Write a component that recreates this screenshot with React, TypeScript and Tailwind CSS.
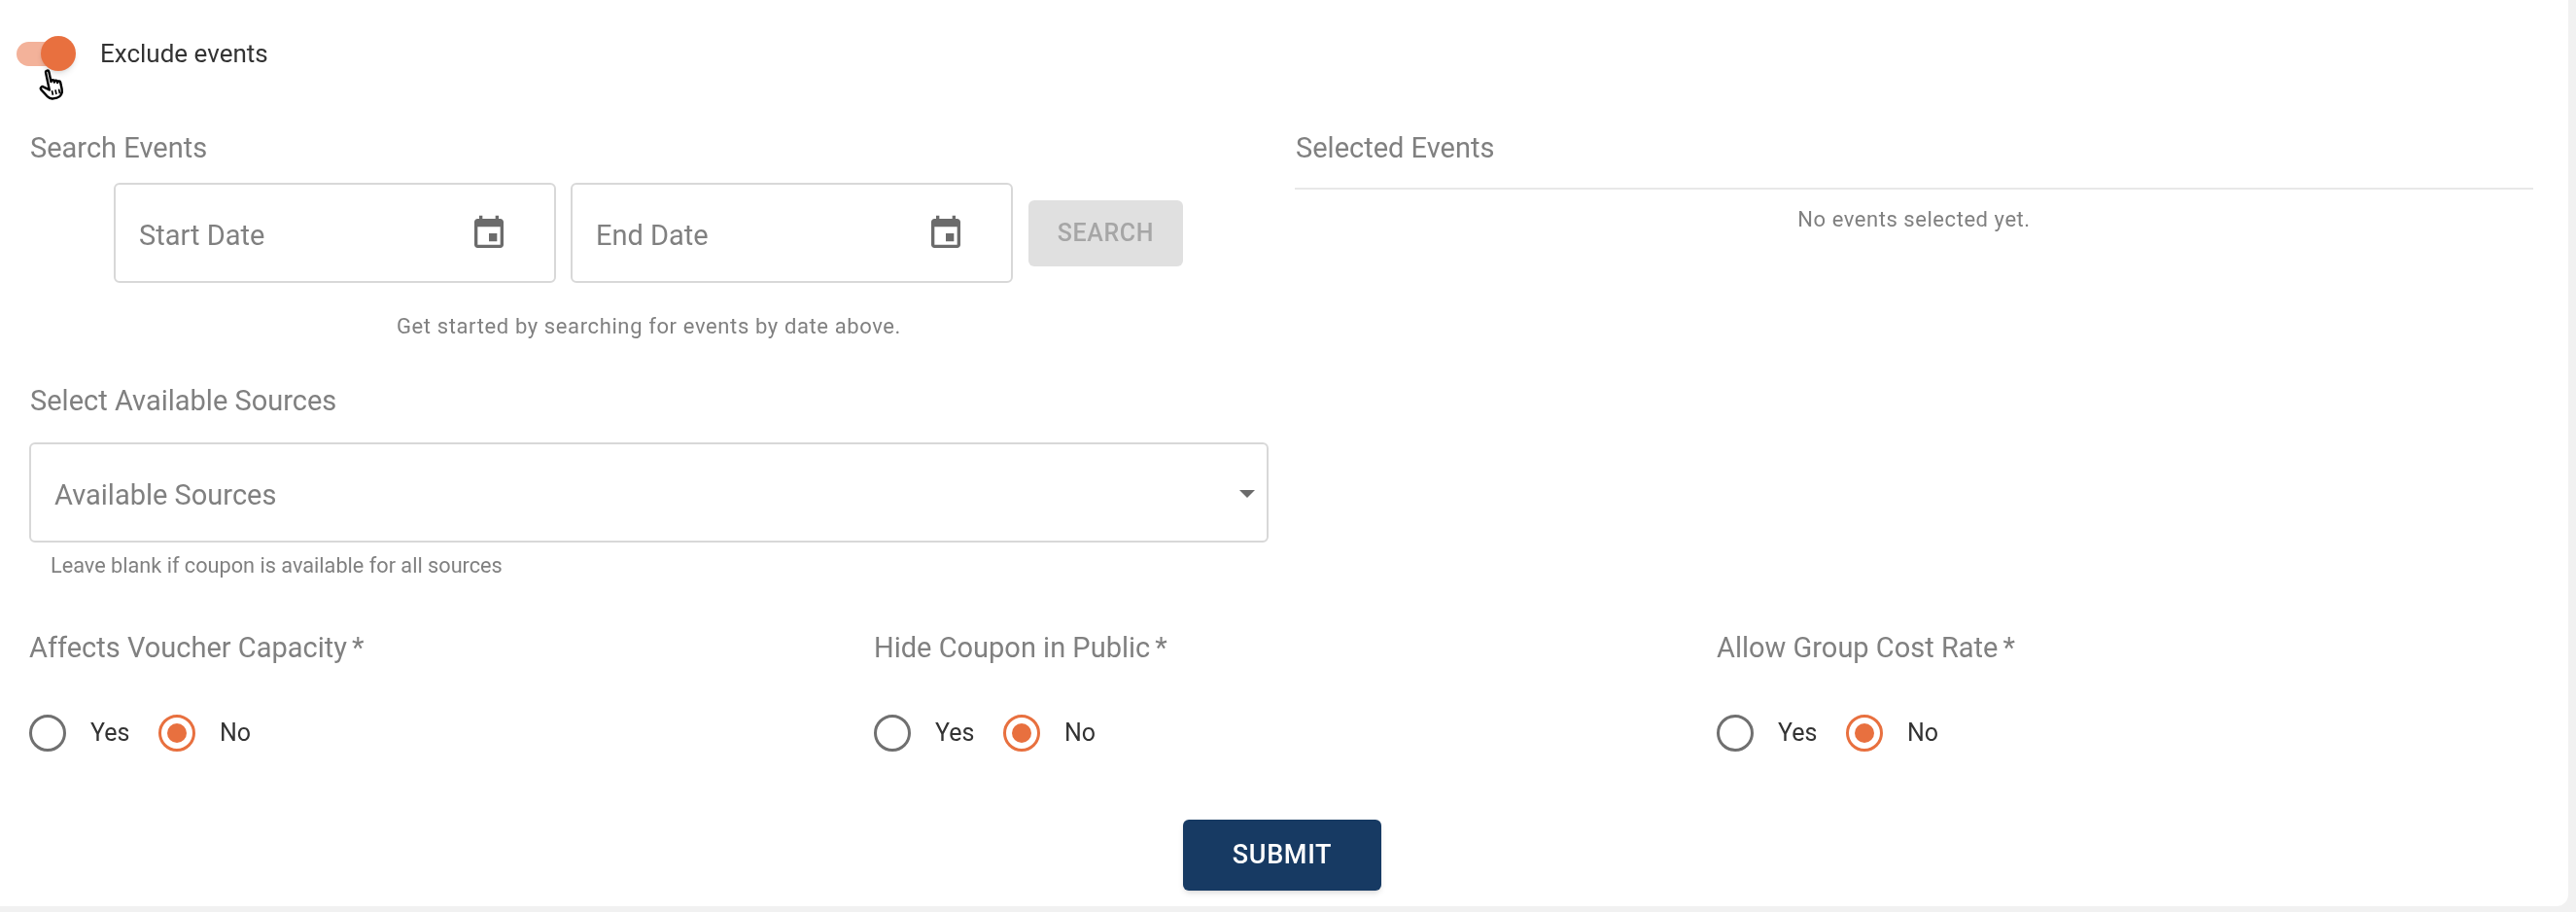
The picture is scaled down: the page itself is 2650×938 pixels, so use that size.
import React from "react";

const CalendarIcon = () => (
  <svg viewBox="0 0 24 24" className="w-10 h-10 fill-[#6b6b6b]">
    <path d="M17 12h-5v5h5v-5zM16 1v2H8V1H6v2H5c-1.11 0-1.99.9-1.99 2L3 19c0 1.1.89 2 2 2h14c1.1 0 2-.9 2-2V5c0-1.1-.9-2-2-2h-1V1h-2zm3 18H5V8h14v11z" />
  </svg>
);

// pointer cursor from the screen recording, tilted a little to the left
const HandCursor = () => (
  <svg viewBox="0 0 24 28" className="absolute left-[22px] top-[33px] w-[29px] h-[35px] -rotate-12">
    <path
      d="M9 2.5c0-1.9 2.8-1.9 2.8 0V11c0-1.6 2.6-1.6 2.6 0v1c0-1.6 2.6-1.6 2.6 0v1c0-1.5 2.5-1.5 2.5 0v6c0 3.5-2.2 6.5-5.6 6.5h-3.2c-2 0-3.4-1-4.4-2.6L2.2 16c-1-1.7 1.2-3.2 2.6-1.8L9 17.5z"
      fill="white"
      stroke="black"
      strokeWidth="2"
      strokeLinejoin="round"
    />
    <path d="M11 18.5v4M14 18.5v4M17 18.5v4" stroke="black" strokeWidth="1.4" />
  </svg>
);

const DateField = ({ label }: { label: string }) => (
  <div className="w-[455px] h-[103px] flex items-center justify-between pl-[24px] pr-[47px] border-2 border-[#d8d8d8] rounded-md">
    <span className="text-[29px] text-[#808080] mt-[6px]">{label}</span>
    <CalendarIcon />
  </div>
);

const RadioGroup = ({ label }: { label: string }) => (
  <div className="flex flex-col">
    <div className="text-[29px] leading-[32px] text-[#808080]">
      {label}
      <span className="ml-[5px]">*</span>
    </div>
    <div className="flex items-center mt-[53px] h-[38px] text-[25px] text-[#333333]">
      <span className="w-[38px] h-[38px] rounded-full border-[3px] border-[#707070]" />
      <span className="ml-[25px] w-[70px]">Yes</span>
      <span className="w-[38px] h-[38px] rounded-full border-[3px] border-[#e8703f] flex items-center justify-center">
        <span className="w-[20px] h-[20px] rounded-full bg-[#e8703f]" />
      </span>
      <span className="ml-[25px]">No</span>
    </div>
  </div>
);

export default function App() {
  return (
    <div className="w-[2650px] h-[938px] bg-[#f1f1f1] font-['Roboto',sans-serif] overflow-hidden">
      <div className="w-[2642px] h-[932px] bg-white rounded-br-xl pl-[30px] pr-[36px] blur-[0.6px]">
        {/* toggle row */}
        <div className="relative flex items-center h-[36px] translate-y-[37px] -ml-[13px]">
          <div className="relative w-[61px] h-[36px]">
            <div className="absolute left-0 top-[6px] w-[56px] h-[25px] rounded-full bg-[#f3b29a]" />
            <div className="absolute right-0 top-0 w-[36px] h-[36px] rounded-full bg-[#e8703f] shadow-md" />
            <HandCursor />
          </div>
          <span className="ml-[25px] text-[26px] text-[#333333]">Exclude events</span>
        </div>

        <div className="flex gap-[27px] mt-[100px]">
          {/* left column */}
          <div className="w-[1275px] shrink-0">
            <div className="text-[29px] leading-[32px] text-[#808080] pl-px">Search Events</div>
            <div className="flex items-center gap-[15px] mt-[20px] ml-[87px]">
              <DateField label="Start Date" />
              <DateField label="End Date" />
              <button className="w-[159px] h-[68px] ml-px bg-[#e0e0e0] rounded-md text-[25px] font-medium tracking-wide text-[#a6a6a6]">
                SEARCH
              </button>
            </div>
            <div className="w-[1275px] text-center text-[22px] tracking-[0.028em] text-[#808080] mt-[32px] leading-[26px]">
              Get started by searching for events by date above.
            </div>
            <div className="text-[29px] leading-[32px] text-[#808080] mt-[47px] pl-px">Select Available Sources</div>
            <div className="relative h-[103px] mt-[27px] border-2 border-[#d8d8d8] rounded-md flex items-center pl-[24px]">
              <span className="text-[29px] text-[#808080] mt-[7px]">Available Sources</span>
              <span className="absolute right-[12px] top-[47px] w-0 h-0 border-x-[8px] border-x-transparent border-t-[8px] border-t-[#6b6b6b]" />
            </div>
            <div className="ml-[22px] mt-[11px] text-[21.7px] leading-[26px] text-[#808080]">
              Leave blank if coupon is available for all sources
            </div>
          </div>

          {/* right column */}
          <div className="flex-1">
            <div className="text-[29px] leading-[32px] text-[#808080] pb-[25px] border-b-2 border-[#e8e8e8] pl-px">Selected Events</div>
            <div className="text-center text-[22px] tracking-wide text-[#808080] mt-[14px]">No events selected yet.</div>
          </div>
        </div>

        <div className="grid grid-cols-[869px_867px_1fr] mt-[55px]">
          <RadioGroup label="Affects Voucher Capacity" />
          <RadioGroup label="Hide Coupon in Public" />
          <RadioGroup label="Allow Group Cost Rate" />
        </div>

        <div className="flex justify-center mt-[70px] pl-[2px]">
          <button className="w-[204px] h-[73px] bg-[#173a63] rounded-md text-white text-[27px] font-medium tracking-wide shadow-md">
            SUBMIT
          </button>
        </div>
      </div>
    </div>
  );
}
